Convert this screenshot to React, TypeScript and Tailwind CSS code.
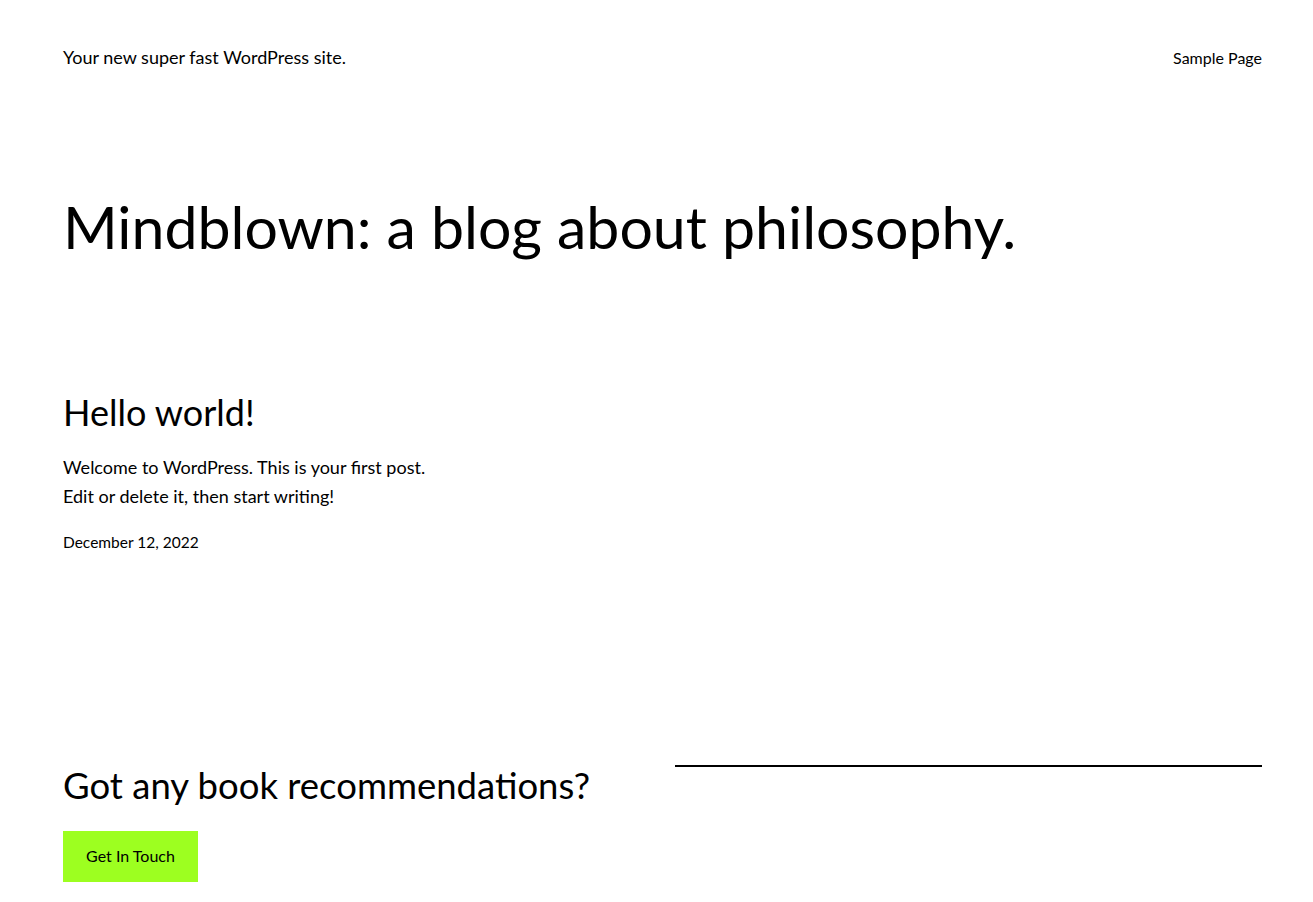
export default function App() {
  return (
    <div className="min-h-screen bg-white text-black font-['Lato',sans-serif]">
      {/* Header */}
      <header className="flex items-center justify-between pl-[63px] pr-[51px] pt-[43px]">
        <p className="text-[18px] leading-[28px]">Your new super fast WordPress site.</p>
        <nav>
          <a className="text-[16px] leading-[28px] relative top-[1px]">Sample Page</a>
        </nav>
      </header>

      <main className="pl-[63px] pr-[51px]">
        <h1 className="mt-[121px] text-[59px] leading-[1.2] font-normal">
          Mindblown: a blog about philosophy.
        </h1>

        {/* Post */}
        <article className="mt-[128px]">
          <h2 className="text-[36px] leading-[1.2] font-normal">Hello world!</h2>
          <div className="mt-[19px] text-[18px] leading-[29px]">
            <p>Welcome to WordPress. This is your first post.</p>
            <p>Edit or delete it, then start writing!</p>
          </div>
          <p className="mt-[19px] text-[15.5px] leading-[24px]">December 12, 2022</p>
        </article>
      </main>

      {/* Footer call to action */}
      <footer className="mt-[210px] grid grid-cols-2 gap-6 pl-[63px] pr-[51px] pb-[20px]">
        <div>
          <h2 className="text-[36.5px] leading-[1.2] font-normal">Got any book recommendations?</h2>
          <a className="mt-[23px] inline-flex h-[51px] w-[135px] items-center justify-center bg-[#9dff20] text-[16px]">
            Get In Touch
          </a>
        </div>
        <div>
          <hr className="mt-[1px] border-0 border-t-2 border-black" />
        </div>
      </footer>
    </div>
  );
}
